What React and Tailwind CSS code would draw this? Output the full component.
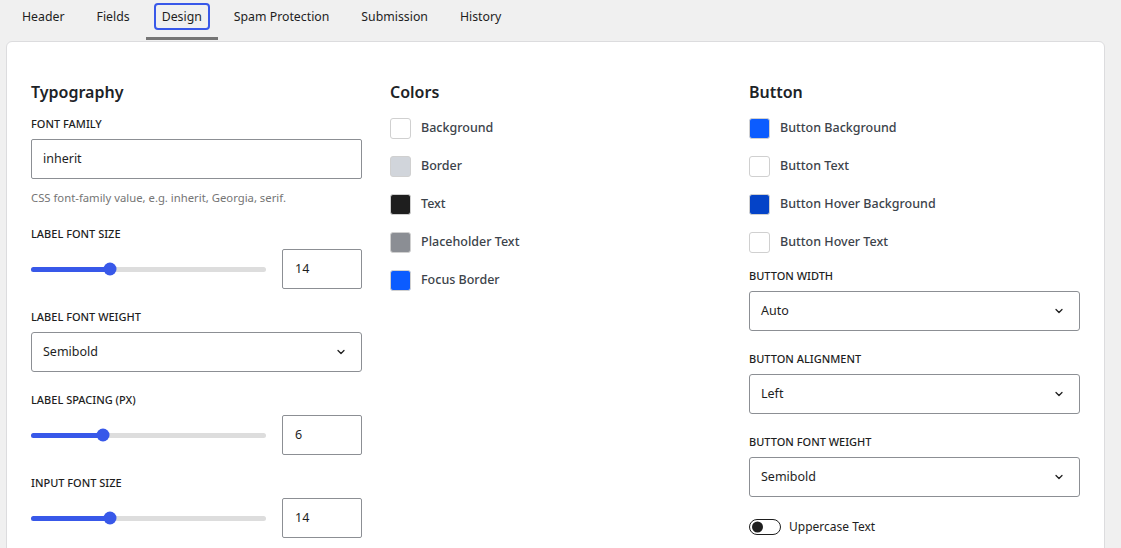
import { ChevronDown } from "lucide-react";

const tabs = ["Header", "Fields", "Design", "Spam Protection", "Submission", "History"];

const colorItems = [
  { label: "Background", color: "bg-white" },
  { label: "Border", color: "bg-[#d1d5db]" },
  { label: "Text", color: "bg-[#1e1e1e]" },
  { label: "Placeholder Text", color: "bg-[#8b8e94]" },
  { label: "Focus Border", color: "bg-[#0b5cff]" },
];

const buttonColors = [
  { label: "Button Background", color: "bg-[#0b5cff]" },
  { label: "Button Text", color: "bg-white" },
  { label: "Button Hover Background", color: "bg-[#0443c8]" },
  { label: "Button Hover Text", color: "bg-white" },
];

// label above every control
const FieldLabel = ({ children }) => (
  <div className="text-[11px] leading-4 font-medium uppercase text-[#1e1e1e] mb-[7px]">{children}</div>
);

const Select = ({ value }) => (
  <div className="h-10 border border-[#8c8f94] rounded-[3px] bg-white flex items-center justify-between pl-[11px] pr-[14px] text-[12.5px] text-[#1e1e1e]">
    <span>{value}</span>
    <ChevronDown className="w-3 h-3 text-[#1e1e1e]" strokeWidth={2.5} />
  </div>
);

const RangeRow = ({ label, value, pos }) => (
  <div>
    <FieldLabel>{label}</FieldLabel>
    <div className="flex items-center gap-4">
      <div className="relative flex-1 h-[5px] rounded-full bg-[#dddddd]">
        <div className="absolute left-0 top-0 h-full rounded-full bg-[#3858e9]" style={{ width: `${pos}px` }} />
        <div
          className="absolute top-1/2 -translate-y-1/2 -translate-x-1/2 w-[13px] h-[13px] rounded-full bg-[#3858e9]"
          style={{ left: `${pos}px` }}
        />
      </div>
      <div className="w-20 h-10 border border-[#8c8f94] rounded-[2px] flex items-center px-3 text-[12.5px] text-[#1e1e1e]">
        {value}
      </div>
    </div>
  </div>
);

const Swatch = ({ label, color }) => (
  <div className="flex items-center gap-[10px] h-[22px]">
    <div className={`w-[21px] h-[21px] rounded-[3px] border border-[#d0d0d0] ${color}`} />
    <span className="text-[12.5px] font-medium text-[#3c434a]">{label}</span>
  </div>
);

export default function App() {
  return (
    <div
      className="min-h-screen bg-[#f0f0f0] text-[#1e1e1e]"
      style={{ fontFamily: '"Noto Sans", "Open Sans", sans-serif' }}
    >
      {/* Tabs */}
      <div className="flex pl-[6px] h-[41px]">
        {tabs.map((t) => (
          <div key={t} className="relative px-[8px] flex items-start pt-[3px] text-[12.3px]">
            <span
              className={`px-[6px] h-[27px] pt-[2px] flex items-center rounded-[4px] border-2 ${
                t === "Design" ? "border-[#3858e9]" : "border-transparent"
              }`}
            >
              {t}
            </span>
            {t === "Design" && <div className="absolute left-0 right-0 bottom-[1px] h-[3px] bg-[#757575]" />}
          </div>
        ))}
      </div>

      {/* Card */}
      <div className="ml-[6px] mr-[16px] bg-white border border-[#dcdcde] rounded-[6px] px-6 pt-[38px] pb-6">
        <div className="grid grid-cols-3 gap-7">
          {/* Typography */}
          <div>
            <h2 className="text-[16px] leading-6 font-semibold text-[#1d2327] mb-3">Typography</h2>
            <div className="mb-5">
              <FieldLabel>Font Family</FieldLabel>
              <div className="h-10 border border-[#8c8f94] rounded-[2px] flex items-center pl-[11px] pr-3 text-[12.5px]">
                inherit
              </div>
              <div className="mt-[11px] text-[11.3px] leading-4 text-[#757575]">
                CSS font-family value, e.g. inherit, Georgia, serif.
              </div>
            </div>
            <div className="flex flex-col gap-[20px]">
              <RangeRow label="Label Font Size" value="14" pos={79} />
              <div>
                <FieldLabel>Label Font Weight</FieldLabel>
                <Select value="Semibold" />
              </div>
              <RangeRow label="Label Spacing (px)" value="6" pos={72} />
              <RangeRow label="Input Font Size" value="14" pos={79} />
            </div>
          </div>

          {/* Colors */}
          <div>
            <h2 className="text-[16px] leading-6 font-semibold text-[#1d2327] mb-[13px]">Colors</h2>
            <div className="flex flex-col gap-4">
              {colorItems.map((c) => (
                <Swatch key={c.label} {...c} />
              ))}
            </div>
          </div>

          {/* Button */}
          <div>
            <h2 className="text-[16px] leading-6 font-semibold text-[#1d2327] mb-[13px]">Button</h2>
            <div className="flex flex-col gap-4">
              {buttonColors.map((c) => (
                <Swatch key={c.label} {...c} />
              ))}
            </div>
            <div className="mt-[15px] flex flex-col gap-[20px]">
              <div>
                <FieldLabel>Button Width</FieldLabel>
                <Select value="Auto" />
              </div>
              <div>
                <FieldLabel>Button Alignment</FieldLabel>
                <Select value="Left" />
              </div>
              <div>
                <FieldLabel>Button Font Weight</FieldLabel>
                <Select value="Semibold" />
              </div>
              <div className="flex items-center gap-2 mt-[2px] h-4">
                <div className="relative w-8 h-4 rounded-full border border-[#1e1e1e] bg-white">
                  <div className="absolute left-[2px] top-1/2 -translate-y-1/2 w-[11px] h-[11px] rounded-full bg-[#1e1e1e]" />
                </div>
                <span className="text-[12px] leading-4 text-[#1e1e1e]">Uppercase Text</span>
              </div>
            </div>
          </div>
        </div>
      </div>
    </div>
  );
}
